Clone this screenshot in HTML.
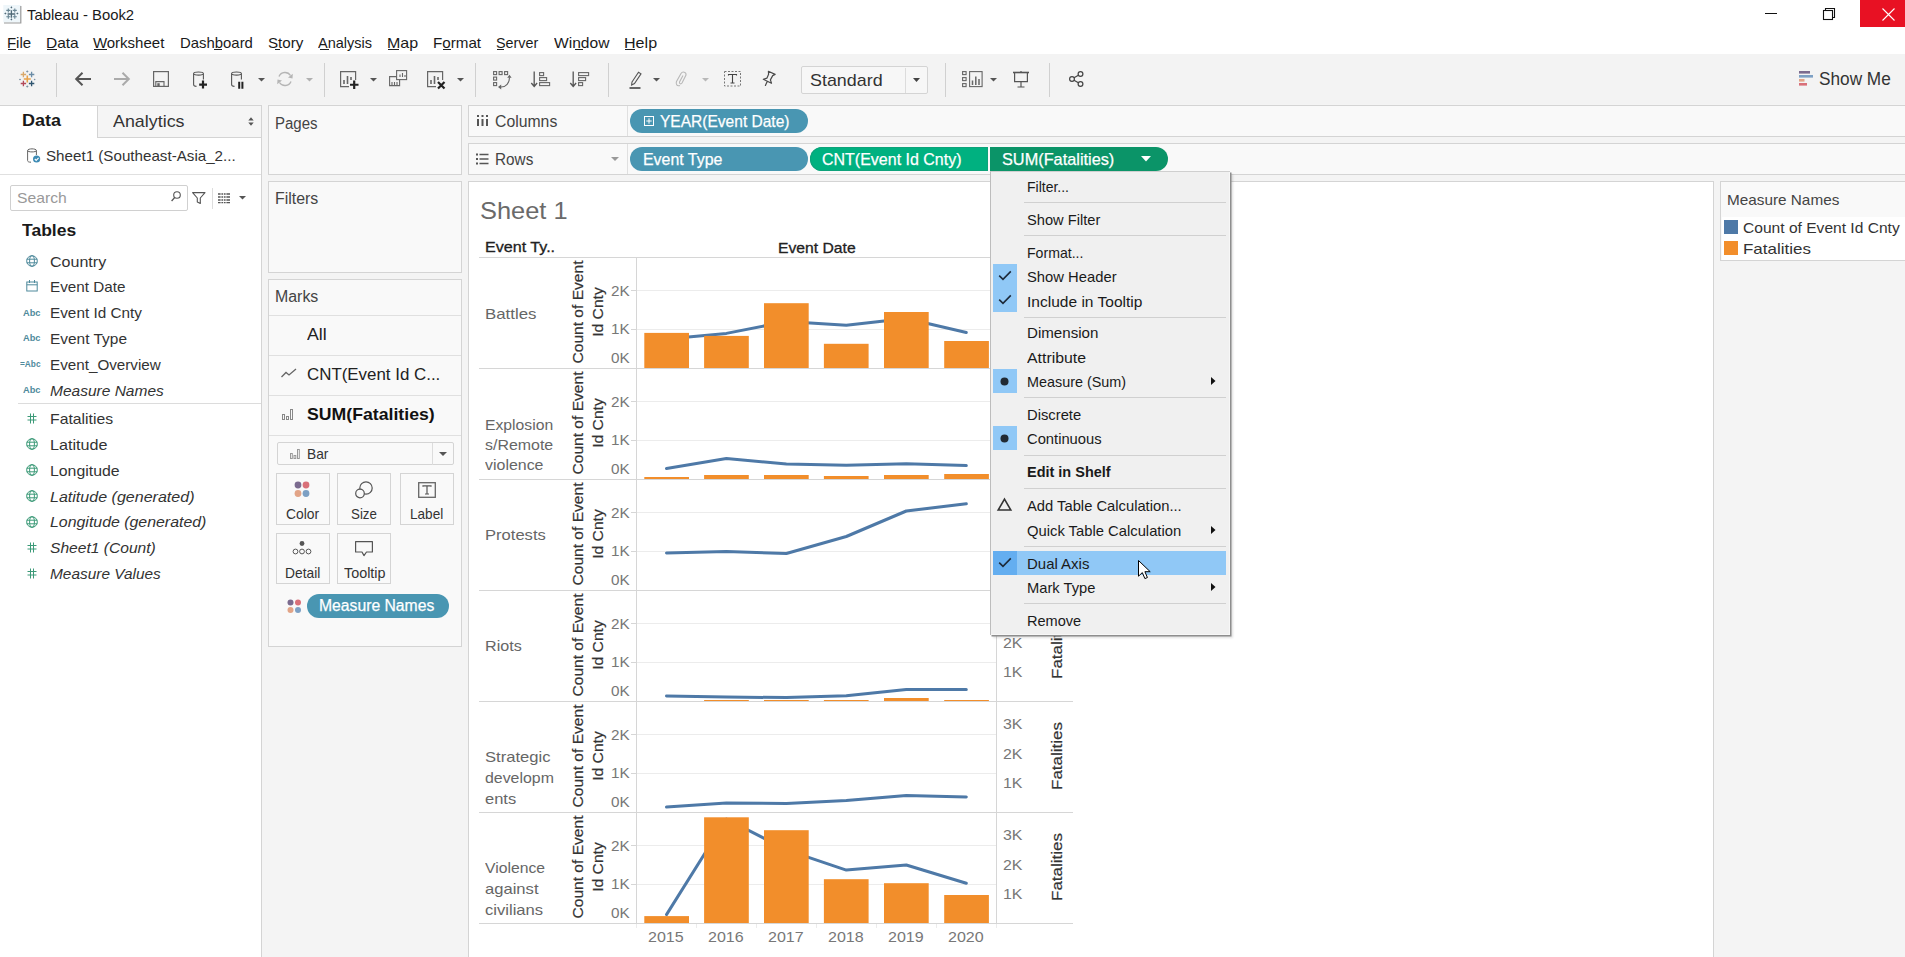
<!DOCTYPE html>
<html><head><meta charset="utf-8"><title>Tableau - Book2</title>
<style>
html,body{margin:0;padding:0;}
body{width:1905px;height:957px;overflow:hidden;position:relative;background:#f4f4f4;font-family:'Liberation Sans', sans-serif;}
.t{position:absolute;white-space:nowrap;transform-origin:0 0;}
svg{overflow:visible}
</style></head><body>
<div style="position:absolute;left:0px;top:0px;width:1905px;height:54px;background:#fff"></div><svg style="position:absolute;left:3px;top:5px;" width="19" height="19" viewBox="0 0 19 19"><rect x="0.3" y="0" width="17.5" height="17.5" fill="#eef6fa"/><path d="M17.8 1V18H1" fill="none" stroke="#9a9a9a" stroke-width="1.2"/><g stroke="#506a78" stroke-width="1.3"><path d="M8.4 5.2v7.6M4.6 9h7.6"/></g><g stroke="#6a8694" stroke-width="1.1"><path d="M5.3 3.4v4M3.3 5.4h4M11.8 3.4v4M9.8 5.4h4M5.3 9.8v4M3.3 11.8h4M11.8 9.8v4M9.8 11.8h4"/></g><g fill="#506a78"><path d="M8.4 1.2L9.4 2.4L8.4 3.6L7.4 2.4Z M8.4 13.2L9.4 14.4L8.4 15.6L7.4 14.4Z M1.2 8.4L2.4 7.4L3.6 8.4L2.4 9.4Z M13.2 8.4L14.4 7.4L15.6 8.4L14.4 9.4Z"/></g></svg><div id="t1" class="t" style="left:26.90px;top:7.00px;font-size:15px;line-height:15px;color:#1a1a1a;transform:scaleX(0.9880);">Tableau - Book2</div><div style="position:absolute;left:1765px;top:13px;width:12px;height:1px;background:#111"></div><svg style="position:absolute;left:1822px;top:7px;" width="14" height="14" viewBox="0 0 14 14"><rect x="1.5" y="3.5" width="9" height="9" fill="none" stroke="#111" stroke-width="1.1"/><path d="M3.5 3.5V1.5h9v9h-2" fill="none" stroke="#111" stroke-width="1.1"/></svg><div style="position:absolute;left:1860px;top:0px;width:45px;height:27px;background:#e81123"></div><svg style="position:absolute;left:1882px;top:8px;" width="13" height="13" viewBox="0 0 13 13"><path d="M0.5 0.5L12.5 12.5M12.5 0.5L0.5 12.5" stroke="#fff" stroke-width="1.1"/></svg><div id="t2" class="t" style="left:6.90px;top:34.60px;font-size:15px;line-height:15px;color:#1a1a1a;">File</div><div id="t3" class="t" style="left:46.20px;top:34.60px;font-size:15px;line-height:15px;color:#1a1a1a;transform:scaleX(1.0320);">Data</div><div id="t4" class="t" style="left:92.90px;top:34.60px;font-size:15px;line-height:15px;color:#1a1a1a;">Worksheet</div><div id="t5" class="t" style="left:179.50px;top:34.60px;font-size:15px;line-height:15px;color:#1a1a1a;transform:scaleX(0.9933);">Dashboard</div><div id="t6" class="t" style="left:267.90px;top:34.60px;font-size:15px;line-height:15px;color:#1a1a1a;transform:scaleX(1.0110);">Story</div><div id="t7" class="t" style="left:318.40px;top:34.60px;font-size:15px;line-height:15px;color:#1a1a1a;transform:scaleX(0.9667);">Analysis</div><div id="t8" class="t" style="left:386.90px;top:34.60px;font-size:15px;line-height:15px;color:#1a1a1a;transform:scaleX(1.0690);">Map</div><div id="t9" class="t" style="left:433.30px;top:34.60px;font-size:15px;line-height:15px;color:#1a1a1a;transform:scaleX(1.0123);">Format</div><div id="t10" class="t" style="left:495.90px;top:34.60px;font-size:15px;line-height:15px;color:#1a1a1a;transform:scaleX(0.9573);">Server</div><div id="t11" class="t" style="left:553.70px;top:34.60px;font-size:15px;line-height:15px;color:#1a1a1a;transform:scaleX(1.0382);">Window</div><div id="t12" class="t" style="left:624.20px;top:34.60px;font-size:15px;line-height:15px;color:#1a1a1a;transform:scaleX(1.0726);">Help</div><div style="position:absolute;left:8px;top:49px;width:8px;height:1px;background:#222"></div><div style="position:absolute;left:47px;top:49px;width:10px;height:1px;background:#222"></div><div style="position:absolute;left:94px;top:49px;width:13px;height:1px;background:#222"></div><div style="position:absolute;left:214px;top:49px;width:8px;height:1px;background:#222"></div><div style="position:absolute;left:275px;top:49px;width:5px;height:1px;background:#222"></div><div style="position:absolute;left:319.5px;top:49px;width:9px;height:1px;background:#222"></div><div style="position:absolute;left:388px;top:49px;width:11px;height:1px;background:#222"></div><div style="position:absolute;left:443px;top:49px;width:8px;height:1px;background:#222"></div><div style="position:absolute;left:497px;top:49px;width:7px;height:1px;background:#222"></div><div style="position:absolute;left:575px;top:49px;width:8px;height:1px;background:#222"></div><div style="position:absolute;left:625.3px;top:49px;width:10px;height:1px;background:#222"></div><div style="position:absolute;left:0px;top:54px;width:1905px;height:50px;background:#f3f3f3"></div><div style="position:absolute;left:56px;top:63px;width:1px;height:34px;background:#d0d0d0"></div><div style="position:absolute;left:324px;top:63px;width:1px;height:34px;background:#d0d0d0"></div><div style="position:absolute;left:475px;top:63px;width:1px;height:34px;background:#d0d0d0"></div><div style="position:absolute;left:608px;top:63px;width:1px;height:34px;background:#d0d0d0"></div><div style="position:absolute;left:945px;top:63px;width:1px;height:34px;background:#d0d0d0"></div><div style="position:absolute;left:1049px;top:63px;width:1px;height:34px;background:#d0d0d0"></div><svg style="position:absolute;left:20px;top:69.5px;" width="15" height="18" viewBox="0 0 15 18"><g stroke-width="1.6"><path d="M7.3 5.5v7M3.8 9h7" stroke="#e8a24a"/><path d="M3.4 1.8v5.4M0.7 4.5h5.4" stroke="#d9a86a" stroke-width="1.3"/><path d="M11.6 1.8v5.4M8.9 4.5h5.4" stroke="#6a8ca6" stroke-width="1.3"/><path d="M3.4 10.8v5.4M0.7 13.5h5.4" stroke="#b34a5a" stroke-width="1.3"/><path d="M11.6 10.8v5.4M8.9 13.5h5.4" stroke="#2f5570" stroke-width="1.3"/><path d="M7.3 0.5v2M6.3 1.5h2M7.3 15.5v2M6.3 16.5h2M0 8.8v1.4M-0.7 9.5h1.4M14.6 8.8v1.4M13.9 9.5h1.4" stroke="#7f93a3" stroke-width="1"/></g></svg><svg style="position:absolute;left:75px;top:72px;" width="17" height="14" viewBox="0 0 17 14"><path d="M1 7H16M7.5 0.8L1.2 7L7.5 13.2" fill="none" stroke="#555" stroke-width="2"/></svg><svg style="position:absolute;left:114px;top:72px;" width="17" height="14" viewBox="0 0 17 14"><path d="M0 7H15M8.5 0.8L14.8 7L8.5 13.2" fill="none" stroke="#aaa" stroke-width="2"/></svg><svg style="position:absolute;left:153px;top:71px;" width="16" height="16" viewBox="0 0 16 16"><rect x="0.6" y="0.6" width="14.8" height="14.8" fill="none" stroke="#666" stroke-width="1.2"/><path d="M2.8 15.4V10.6h8.2v4.8" fill="none" stroke="#666" stroke-width="1.1"/><rect x="4.3" y="12.2" width="2.4" height="3" fill="#666"/></svg><svg style="position:absolute;left:193px;top:71px;" width="16" height="18" viewBox="0 0 16 18"><path d="M0.6 2.6C0.6 0.4 10.4 0.4 10.4 2.6V8.5M0.6 2.6C0.6 4.6 10.4 4.6 10.4 2.6M0.6 2.6V13.6C0.6 15 2.5 15.4 3.5 15.4" fill="none" stroke="#555" stroke-width="1.1"/><path d="M10 9.6v8M6.2 13.6h7.8" stroke="#222" stroke-width="2.2"/></svg><svg style="position:absolute;left:231px;top:71px;" width="16" height="18" viewBox="0 0 16 18"><path d="M0.6 2.6C0.6 0.4 10.4 0.4 10.4 2.6V8.5M0.6 2.6C0.6 4.6 10.4 4.6 10.4 2.6M0.6 2.6V13.6C0.6 15 2.5 15.4 3.5 15.4" fill="none" stroke="#555" stroke-width="1.1"/><path d="M8.2 10.8v7M11.4 10.8v7" stroke="#222" stroke-width="2"/></svg><svg style="position:absolute;left:258.0px;top:77.7px;" width="7" height="3.6" viewBox="0 0 7 3.6"><path d="M0 0H7L3.5 3.6Z" fill="#555"/></svg><svg style="position:absolute;left:276px;top:71px;" width="18" height="16" viewBox="0 0 18 16"><path d="M3 5.5A6.5 6.5 0 0 1 14.5 4.5M15 10.5A6.5 6.5 0 0 1 3.5 11.5" fill="none" stroke="#b5b5b5" stroke-width="1.4"/><path d="M16.8 2.8L16.5 7.5L12 6.5Z M1.2 13.2L1.5 8.5L6 9.5Z" fill="#b5b5b5"/></svg><svg style="position:absolute;left:306.2px;top:77.7px;" width="7" height="3.6" viewBox="0 0 7 3.6"><path d="M0 0H7L3.5 3.6Z" fill="#b0b0b0"/></svg><svg style="position:absolute;left:340px;top:71px;" width="20" height="19" viewBox="0 0 20 19"><path d="M15.6 9V0.6H0.6V15.6H9" fill="none" stroke="#666" stroke-width="1.2"/><path d="M4 13V9M7.5 13V5M11 9V6" stroke="#666" stroke-width="1.6"/><path d="M14.2 9.5v8.5M10 13.75h8.5" stroke="#222" stroke-width="2.2"/></svg><svg style="position:absolute;left:370.0px;top:77.7px;" width="7" height="3.6" viewBox="0 0 7 3.6"><path d="M0 0H7L3.5 3.6Z" fill="#555"/></svg><svg style="position:absolute;left:389px;top:70px;" width="19" height="17" viewBox="0 0 19 17"><rect x="7.6" y="0.6" width="10" height="9" fill="#f3f3f3" stroke="#666" stroke-width="1.1"/><path d="M11 7V4.5M13.5 7V3M16 7V5" stroke="#666" stroke-width="1.1"/><path d="M7.6 6.6H0.6V15.6H10.6V9.6" fill="none" stroke="#666" stroke-width="1.1"/><path d="M3 15v-3M5.5 15v-3M8 15v-3" stroke="#666" stroke-width="1.1"/></svg><svg style="position:absolute;left:427px;top:71px;" width="20" height="19" viewBox="0 0 20 19"><path d="M15.6 9V0.6H0.6V15.6H9" fill="none" stroke="#666" stroke-width="1.2"/><path d="M4 13V9M7.5 13V5M11 9V6" stroke="#666" stroke-width="1.6"/><path d="M11 11L17.5 17.5M17.5 11L11 17.5" stroke="#222" stroke-width="2.2"/></svg><svg style="position:absolute;left:456.5px;top:77.7px;" width="7" height="3.6" viewBox="0 0 7 3.6"><path d="M0 0H7L3.5 3.6Z" fill="#555"/></svg><svg style="position:absolute;left:493px;top:71px;" width="18" height="18" viewBox="0 0 18 18"><g fill="none" stroke="#666" stroke-width="1.1"><rect x="0.6" y="0.6" width="3" height="3"/><rect x="6.1" y="0.6" width="3" height="3"/><rect x="11.6" y="0.6" width="3" height="3"/><rect x="0.6" y="6.1" width="3" height="3"/><rect x="0.6" y="11.6" width="3" height="3"/><path d="M16.5 6.5C16.5 12 13 16 8 16"/></g><path d="M14.2 6.8L16.5 3.8L18.6 6.8Z M8.2 13.6L5 16L8.2 18.4Z" fill="#666"/></svg><svg style="position:absolute;left:531px;top:71px;" width="20" height="17" viewBox="0 0 20 17"><path d="M3.2 0.5V15M0.3 12L3.2 15.5L6.1 12" fill="none" stroke="#555" stroke-width="1.3"/><g fill="none" stroke="#666" stroke-width="1.1"><rect x="8.6" y="1.6" width="4" height="3"/><rect x="8.6" y="6.6" width="7" height="3"/><rect x="8.6" y="11.6" width="10" height="3"/></g></svg><svg style="position:absolute;left:570px;top:71px;" width="20" height="17" viewBox="0 0 20 17"><path d="M3.2 0.5V15M0.3 12L3.2 15.5L6.1 12" fill="none" stroke="#555" stroke-width="1.3"/><g fill="none" stroke="#666" stroke-width="1.1"><rect x="8.6" y="1.6" width="10" height="3"/><rect x="8.6" y="6.6" width="7" height="3"/><rect x="8.6" y="11.6" width="4" height="3"/></g></svg><svg style="position:absolute;left:629px;top:71px;" width="14" height="18" viewBox="0 0 14 18"><path d="M3 11L9.5 1.2L12 2.8L5.5 12.6L2.6 14Z" fill="none" stroke="#555" stroke-width="1.1"/><path d="M0.5 17h11" stroke="#444" stroke-width="1.6"/></svg><svg style="position:absolute;left:652.5px;top:77.7px;" width="7" height="3.6" viewBox="0 0 7 3.6"><path d="M0 0H7L3.5 3.6Z" fill="#555"/></svg><svg style="position:absolute;left:675px;top:71px;" width="13" height="16" viewBox="0 0 13 16"><path d="M5 14.5C2 15.5 0.5 13 1.5 10.5L6 2.5C7.5 0 11.5 1 11 4L7 12C6 13.5 4 13 4.5 11L8 4.5" fill="none" stroke="#b8b8b8" stroke-width="1.1"/></svg><svg style="position:absolute;left:701.5px;top:77.7px;" width="7" height="3.6" viewBox="0 0 7 3.6"><path d="M0 0H7L3.5 3.6Z" fill="#b8b8b8"/></svg><svg style="position:absolute;left:724px;top:71px;" width="18" height="16" viewBox="0 0 18 16"><rect x="0.5" y="0.5" width="16" height="14.5" fill="none" stroke="#777" stroke-width="1" stroke-dasharray="2 1.5"/><path d="M4.5 4.5V3.5H12.5V4.5M8.5 3.5V12M6.5 12h4" fill="none" stroke="#444" stroke-width="1.1"/></svg><svg style="position:absolute;left:755px;top:66px;" width="30" height="26" viewBox="0 0 30 26"><path d="M13.4 5.3L20.1 8.4L17.7 9.6L15.4 13.9L16.5 17.3L12.3 15.2L8.3 13.3L12 12.1L13.6 8.3Z M12.3 15.3L10.4 19.4" fill="none" stroke="#4a4a4a" stroke-width="1.2" stroke-linejoin="round" stroke-linecap="round"/></svg><div style="position:absolute;left:800.8px;top:66px;width:127px;height:27.5px;background:#f7f7f7;border:1px solid #d4d4d4;border-radius:2px;box-sizing:border-box"></div><div style="position:absolute;left:905px;top:67.5px;width:1px;height:25px;background:#dcdcdc"></div><div id="t13" class="t" style="left:809.70px;top:71.61px;font-size:17px;line-height:17px;color:#333;transform:scaleX(1.0522);">Standard</div><svg style="position:absolute;left:912.5px;top:78.0px;" width="7" height="4" viewBox="0 0 7 4"><path d="M0 0H7L3.5 4Z" fill="#444"/></svg><svg style="position:absolute;left:962px;top:71px;" width="21" height="17" viewBox="0 0 21 17"><g fill="none" stroke="#666" stroke-width="1.1"><rect x="0.6" y="0.6" width="3.5" height="3"/><rect x="0.6" y="6.6" width="3.5" height="3"/><rect x="0.6" y="12.6" width="3.5" height="3"/><rect x="7.6" y="0.6" width="12.5" height="15"/></g><path d="M10.5 14V9.5M13.8 14V5.5M17 14V8" stroke="#666" stroke-width="1.5"/></svg><svg style="position:absolute;left:989.5px;top:77.7px;" width="7" height="3.6" viewBox="0 0 7 3.6"><path d="M0 0H7L3.5 3.6Z" fill="#555"/></svg><svg style="position:absolute;left:1012px;top:71px;" width="18" height="17" viewBox="0 0 18 17"><path d="M1 1.5H17" stroke="#555" stroke-width="1.6"/><path d="M2.6 2V10.6H15.4V2" fill="none" stroke="#555" stroke-width="1.2"/><path d="M9 0V1M9 10.6V16M5.5 16h7" stroke="#555" stroke-width="1.2"/></svg><svg style="position:absolute;left:1069px;top:71px;" width="15" height="16" viewBox="0 0 15 16"><g fill="none" stroke="#444" stroke-width="1.2"><circle cx="3" cy="8" r="2.4"/><circle cx="11.5" cy="3" r="2.4"/><circle cx="11.5" cy="13" r="2.4"/><path d="M5 6.8L9.4 4.2M5 9.2L9.4 11.8"/></g></svg><svg style="position:absolute;left:1799px;top:71px;" width="15" height="15" viewBox="0 0 15 15"><rect x="0" y="0" width="11" height="2.6" fill="#7b6b8f"/><rect x="0" y="4" width="14" height="2.6" fill="#7da0c4"/><rect x="0" y="8" width="5.5" height="2.6" fill="#e2a487"/><rect x="0" y="12" width="8" height="2.6" fill="#d97079"/></svg><div id="t14" class="t" style="left:1818.60px;top:69.56px;font-size:18px;line-height:18px;color:#333;transform:scaleX(0.9567);">Show Me</div><div style="position:absolute;left:0px;top:105px;width:262px;height:852px;background:#fff;border-top:1px solid #d4d4d4;border-right:1px solid #d4d4d4;box-sizing:border-box"></div><div style="position:absolute;left:97px;top:106px;width:164px;height:32px;background:#f5f5f5;border-left:1px solid #d4d4d4;border-bottom:1px solid #d4d4d4;box-sizing:border-box"></div><div id="t15" class="t" style="left:21.60px;top:112.21px;font-size:17px;line-height:17px;color:#1a1a1a;font-weight:bold;transform:scaleX(1.0581);">Data</div><div id="t16" class="t" style="left:112.90px;top:113.21px;font-size:17px;line-height:17px;color:#333;transform:scaleX(1.0510);">Analytics</div><svg style="position:absolute;left:247.5px;top:116.5px;" width="6" height="9" viewBox="0 0 6 9"><path d="M0.3 3.4L3 0.3L5.7 3.4Z M0.3 5.6L3 8.7L5.7 5.6Z" fill="#555"/></svg><svg style="position:absolute;left:27px;top:148px;" width="14" height="15" viewBox="0 0 14 15"><path d="M0.6 2.5C0.6 0.3 9.4 0.3 9.4 2.5V7M0.6 2.5C0.6 4.4 9.4 4.4 9.4 2.5M0.6 2.5V12.5C0.6 13.8 2 14.2 4 14.2" fill="none" stroke="#666" stroke-width="1"/><circle cx="9.6" cy="11" r="3.6" fill="#3d8bb4"/><path d="M7.8 11L9.2 12.4L11.6 9.8" fill="none" stroke="#fff" stroke-width="1.1"/></svg><div id="t17" class="t" style="left:45.70px;top:148.30px;font-size:15px;line-height:15px;color:#333;transform:scaleX(1.0111);">Sheet1 (Southeast-Asia_2...</div><div style="position:absolute;left:0px;top:174px;width:261px;height:1px;background:#e0e0e0"></div><div style="position:absolute;left:10.3px;top:184.6px;width:177.5px;height:26.7px;background:#fff;border:1px solid #d0d0d0;border-radius:2px;box-sizing:border-box"></div><div id="t18" class="t" style="left:17.30px;top:189.60px;font-size:15px;line-height:15px;color:#999;transform:scaleX(1.0456);">Search</div><svg style="position:absolute;left:171px;top:191px;" width="10" height="11" viewBox="0 0 10 11"><circle cx="6" cy="4" r="3.3" fill="none" stroke="#555" stroke-width="1.1"/><path d="M3.7 6.5L0.6 10" stroke="#555" stroke-width="1.2"/></svg><svg style="position:absolute;left:192px;top:192px;" width="14" height="12" viewBox="0 0 14 12"><path d="M0.6 0.6H13L8.3 6V11.5L5.3 10V6Z" fill="none" stroke="#555" stroke-width="1.1" stroke-linejoin="round"/></svg><div style="position:absolute;left:211.5px;top:188px;width:1px;height:21px;background:#ddd"></div><svg style="position:absolute;left:218px;top:193px;" width="12" height="10" viewBox="0 0 12 10"><g stroke="#555" stroke-width="1.3"><path d="M0 1H12M0 4H12M0 7H12M0 9.6H12"/></g><g stroke="#fff" stroke-width="0.8"><path d="M3 0V11M5.5 0V11M8 0V11"/></g></svg><svg style="position:absolute;left:238.8px;top:196.2px;" width="7" height="3.6" viewBox="0 0 7 3.6"><path d="M0 0H7L3.5 3.6Z" fill="#555"/></svg><div id="t19" class="t" style="left:21.70px;top:222.11px;font-size:17px;line-height:17px;color:#1a1a1a;font-weight:bold;transform:scaleX(1.0305);">Tables</div><svg style="position:absolute;left:25.8px;top:254.7px;" width="12" height="12" viewBox="0 0 12 12"><g fill="none" stroke="#4f8a9c" stroke-width="1"><circle cx="6" cy="6" r="5.3"/><ellipse cx="6" cy="6" rx="2.4" ry="5.3"/><path d="M0.7 4.2H11.3M0.7 7.8H11.3"/></g></svg><div id="t20" class="t" style="left:49.50px;top:253.50px;font-size:15px;line-height:15px;color:#333;transform:scaleX(1.0698);">Country</div><svg style="position:absolute;left:26px;top:280.0px;" width="12" height="12" viewBox="0 0 12 12"><g fill="none" stroke="#4f8a9c" stroke-width="1"><rect x="0.8" y="2" width="10.4" height="9"/><path d="M0.8 4.8H11.2M3.5 0V3M8.5 0V3"/></g></svg><div id="t21" class="t" style="left:49.50px;top:278.80px;font-size:15px;line-height:15px;color:#333;transform:scaleX(1.0159);">Event Date</div><div id="t22" class="t" style="left:22.90px;top:308.58px;font-size:9px;line-height:9px;color:#4f8a9c;font-weight:bold;transform:scaleX(1.0285);">Abc</div><div id="t23" class="t" style="left:49.50px;top:305.20px;font-size:15px;line-height:15px;color:#333;transform:scaleX(1.0206);">Event Id Cnty</div><div id="t24" class="t" style="left:22.90px;top:334.38px;font-size:9px;line-height:9px;color:#4f8a9c;font-weight:bold;transform:scaleX(1.0285);">Abc</div><div id="t25" class="t" style="left:49.50px;top:331.00px;font-size:15px;line-height:15px;color:#333;transform:scaleX(1.0297);">Event Type</div><div id="t26" class="t" style="left:19.90px;top:360.18px;font-size:9px;line-height:9px;color:#4f8a9c;font-weight:bold;transform:scaleX(0.9207);">=Abc</div><div id="t27" class="t" style="left:49.50px;top:356.80px;font-size:15px;line-height:15px;color:#333;transform:scaleX(1.0145);">Event_Overview</div><div id="t28" class="t" style="left:22.90px;top:385.98px;font-size:9px;line-height:9px;color:#4f8a9c;font-weight:bold;transform:scaleX(1.0285);">Abc</div><div id="t29" class="t" style="left:49.50px;top:382.60px;font-size:15px;line-height:15px;color:#333;font-style:italic;transform:scaleX(1.0341);">Measure Names</div><svg style="position:absolute;left:26.8px;top:412.8px;" width="10" height="11" viewBox="0 0 10 11"><g stroke="#3c9a78" stroke-width="1"><path d="M3.5 0.5V10.5M6.5 0.5V10.5M0.5 3.5H9.5M0.5 7H9.5"/></g></svg><div id="t30" class="t" style="left:49.50px;top:411.10px;font-size:15px;line-height:15px;color:#333;transform:scaleX(1.0511);">Fatalities</div><svg style="position:absolute;left:25.8px;top:438.1px;" width="12" height="12" viewBox="0 0 12 12"><g fill="none" stroke="#3c9a78" stroke-width="1"><circle cx="6" cy="6" r="5.3"/><ellipse cx="6" cy="6" rx="2.4" ry="5.3"/><path d="M0.7 4.2H11.3M0.7 7.8H11.3"/></g></svg><div id="t31" class="t" style="left:49.50px;top:436.90px;font-size:15px;line-height:15px;color:#333;transform:scaleX(1.0770);">Latitude</div><svg style="position:absolute;left:25.8px;top:464.0px;" width="12" height="12" viewBox="0 0 12 12"><g fill="none" stroke="#3c9a78" stroke-width="1"><circle cx="6" cy="6" r="5.3"/><ellipse cx="6" cy="6" rx="2.4" ry="5.3"/><path d="M0.7 4.2H11.3M0.7 7.8H11.3"/></g></svg><div id="t32" class="t" style="left:49.50px;top:462.80px;font-size:15px;line-height:15px;color:#333;transform:scaleX(1.0560);">Longitude</div><svg style="position:absolute;left:25.8px;top:489.8px;" width="12" height="12" viewBox="0 0 12 12"><g fill="none" stroke="#3c9a78" stroke-width="1"><circle cx="6" cy="6" r="5.3"/><ellipse cx="6" cy="6" rx="2.4" ry="5.3"/><path d="M0.7 4.2H11.3M0.7 7.8H11.3"/></g></svg><div id="t33" class="t" style="left:49.50px;top:488.60px;font-size:15px;line-height:15px;color:#333;font-style:italic;transform:scaleX(1.0695);">Latitude (generated)</div><svg style="position:absolute;left:25.8px;top:515.6px;" width="12" height="12" viewBox="0 0 12 12"><g fill="none" stroke="#3c9a78" stroke-width="1"><circle cx="6" cy="6" r="5.3"/><ellipse cx="6" cy="6" rx="2.4" ry="5.3"/><path d="M0.7 4.2H11.3M0.7 7.8H11.3"/></g></svg><div id="t34" class="t" style="left:49.50px;top:514.40px;font-size:15px;line-height:15px;color:#333;font-style:italic;transform:scaleX(1.0594);">Longitude (generated)</div><svg style="position:absolute;left:26.8px;top:541.9px;" width="10" height="11" viewBox="0 0 10 11"><g stroke="#3c9a78" stroke-width="1"><path d="M3.5 0.5V10.5M6.5 0.5V10.5M0.5 3.5H9.5M0.5 7H9.5"/></g></svg><div id="t35" class="t" style="left:49.50px;top:540.20px;font-size:15px;line-height:15px;color:#333;font-style:italic;transform:scaleX(1.0400);">Sheet1 (Count)</div><svg style="position:absolute;left:26.8px;top:567.7px;" width="10" height="11" viewBox="0 0 10 11"><g stroke="#3c9a78" stroke-width="1"><path d="M3.5 0.5V10.5M6.5 0.5V10.5M0.5 3.5H9.5M0.5 7H9.5"/></g></svg><div id="t36" class="t" style="left:49.50px;top:566.00px;font-size:15px;line-height:15px;color:#333;font-style:italic;transform:scaleX(1.0274);">Measure Values</div><div style="position:absolute;left:18px;top:403px;width:243px;height:1px;background:#dcdcdc"></div><div style="position:absolute;left:268px;top:105px;width:194px;height:70px;background:#f9f9f9;border:1px solid #d4d4d4;box-sizing:border-box"></div><div id="t37" class="t" style="left:275.30px;top:115.66px;font-size:16px;line-height:16px;color:#444;transform:scaleX(0.9388);">Pages</div><div style="position:absolute;left:268px;top:181px;width:194px;height:92px;background:#f9f9f9;border:1px solid #d4d4d4;box-sizing:border-box"></div><div id="t38" class="t" style="left:275.30px;top:191.46px;font-size:16px;line-height:16px;color:#444;transform:scaleX(0.9940);">Filters</div><div style="position:absolute;left:268px;top:279px;width:194px;height:368px;background:#f9f9f9;border:1px solid #d4d4d4;box-sizing:border-box"></div><div id="t39" class="t" style="left:275.30px;top:289.46px;font-size:16px;line-height:16px;color:#444;transform:scaleX(0.9940);">Marks</div><div style="position:absolute;left:269px;top:315px;width:192px;height:1px;background:#e0e0e0"></div><div style="position:absolute;left:269px;top:355px;width:192px;height:1px;background:#e0e0e0"></div><div style="position:absolute;left:269px;top:395px;width:192px;height:1px;background:#e0e0e0"></div><div style="position:absolute;left:269px;top:435px;width:192px;height:1px;background:#e0e0e0"></div><div id="t40" class="t" style="left:306.70px;top:326.11px;font-size:17px;line-height:17px;color:#222;transform:scaleX(1.0420);">All</div><svg style="position:absolute;left:281px;top:368px;" width="16" height="10" viewBox="0 0 16 10"><path d="M0.5 9L5 4.5L8 7L15 1" fill="none" stroke="#666" stroke-width="1.3"/></svg><div id="t41" class="t" style="left:306.70px;top:366.31px;font-size:17px;line-height:17px;color:#222;transform:scaleX(0.9937);">CNT(Event Id C...</div><svg style="position:absolute;left:282px;top:409px;" width="12" height="11" viewBox="0 0 12 11"><g fill="none" stroke="#888" stroke-width="1"><rect x="0.5" y="5.5" width="2" height="5"/><rect x="4.5" y="7.5" width="2" height="3"/><rect x="8.5" y="0.5" width="2" height="10"/></g></svg><div id="t42" class="t" style="left:306.70px;top:405.61px;font-size:17px;line-height:17px;color:#111;font-weight:bold;transform:scaleX(1.0399);">SUM(Fatalities)</div><div style="position:absolute;left:276.6px;top:442.3px;width:177px;height:23.2px;background:#f9f9f9;border:1px solid #d4d4d4;border-radius:2px;box-sizing:border-box"></div><div style="position:absolute;left:431.6px;top:443px;width:1px;height:22px;background:#dcdcdc"></div><svg style="position:absolute;left:290px;top:449px;" width="10" height="10" viewBox="0 0 10 10"><g fill="none" stroke="#999" stroke-width="1"><rect x="0.5" y="4.5" width="1.8" height="5"/><rect x="4" y="6.5" width="1.8" height="3"/><rect x="7.5" y="0.5" width="1.8" height="9"/></g></svg><div id="t43" class="t" style="left:306.70px;top:446.10px;font-size:15px;line-height:15px;color:#333;transform:scaleX(0.9167);">Bar</div><svg style="position:absolute;left:438.5px;top:452.0px;" width="8" height="4" viewBox="0 0 8 4"><path d="M0 0H8L4.0 4Z" fill="#555"/></svg><div style="position:absolute;left:276.3px;top:473.3px;width:53.5px;height:51.5px;background:#f9f9f9;border:1px solid #d4d4d4;box-sizing:border-box"></div><div style="position:absolute;left:337.4px;top:473.3px;width:53.5px;height:51.5px;background:#f9f9f9;border:1px solid #d4d4d4;box-sizing:border-box"></div><div style="position:absolute;left:400.3px;top:473.3px;width:53.5px;height:51.5px;background:#f9f9f9;border:1px solid #d4d4d4;box-sizing:border-box"></div><div style="position:absolute;left:276.3px;top:532.5px;width:53.5px;height:51.5px;background:#f9f9f9;border:1px solid #d4d4d4;box-sizing:border-box"></div><div style="position:absolute;left:337.4px;top:532.5px;width:53.5px;height:51.5px;background:#f9f9f9;border:1px solid #d4d4d4;box-sizing:border-box"></div><svg style="position:absolute;left:294px;top:481px;" width="16" height="17" viewBox="0 0 16 17"><circle cx="4" cy="4" r="3.4" fill="#7b6b8f"/><circle cx="12" cy="4" r="3.4" fill="#d97079"/><circle cx="4" cy="12.5" r="3.4" fill="#e2a487"/><circle cx="12" cy="12.5" r="3.4" fill="#7da0c4"/></svg><div id="t44" class="t" style="left:286.30px;top:505.90px;font-size:15px;line-height:15px;color:#333;transform:scaleX(0.9231);">Color</div><svg style="position:absolute;left:355px;top:481px;" width="19" height="18" viewBox="0 0 19 18"><g fill="none" stroke="#555" stroke-width="1.2"><circle cx="11" cy="7" r="6.2"/><circle cx="5" cy="12.5" r="4.3" fill="#f9f9f9"/></g></svg><div id="t45" class="t" style="left:351.20px;top:505.90px;font-size:15px;line-height:15px;color:#333;transform:scaleX(0.8874);">Size</div><svg style="position:absolute;left:418px;top:482px;" width="18" height="16" viewBox="0 0 18 16"><rect x="0.7" y="0.7" width="16.6" height="14.6" fill="none" stroke="#666" stroke-width="1.3"/><path d="M5 4.8V3.8H13V4.8M9 3.8V12M7 12h4" fill="none" stroke="#555" stroke-width="1.2"/></svg><div id="t46" class="t" style="left:410.20px;top:505.90px;font-size:15px;line-height:15px;color:#333;transform:scaleX(0.9046);">Label</div><svg style="position:absolute;left:292px;top:541px;" width="20" height="14" viewBox="0 0 20 14"><circle cx="10" cy="2.5" r="2.4" fill="#555"/><g fill="none" stroke="#555" stroke-width="1"><circle cx="3.5" cy="10.5" r="2.4"/><circle cx="10" cy="10.5" r="2.4"/><circle cx="16.5" cy="10.5" r="2.4"/></g></svg><div id="t47" class="t" style="left:285.10px;top:564.80px;font-size:15px;line-height:15px;color:#333;transform:scaleX(0.9202);">Detail</div><svg style="position:absolute;left:355px;top:541px;" width="19" height="16" viewBox="0 0 19 16"><path d="M0.6 0.6H17.4V11H11.5L9 14.6L7 11H0.6Z" fill="none" stroke="#555" stroke-width="1.2" stroke-linejoin="round"/></svg><div id="t48" class="t" style="left:343.90px;top:564.80px;font-size:15px;line-height:15px;color:#333;transform:scaleX(0.9571);">Tooltip</div><svg style="position:absolute;left:286.8px;top:599px;" width="15" height="15" viewBox="0 0 15 15"><circle cx="3.5" cy="3.5" r="3" fill="#7b6b8f"/><circle cx="11" cy="3.5" r="3" fill="#d97079"/><circle cx="3.5" cy="11" r="3" fill="#e2a487"/><circle cx="11" cy="11" r="3" fill="#7da0c4"/></svg><div style="position:absolute;left:307.3px;top:594px;width:141.3px;height:23.8px;background:#4996b2;border-radius:12px"></div><div id="t49" class="t" style="left:319.40px;top:597.96px;font-size:16px;line-height:16px;color:#fff;transform:scaleX(0.9823);-webkit-text-stroke:0.25px #fff;">Measure Names</div><div style="position:absolute;left:468px;top:105px;width:1450px;height:32px;background:#f9f9f9;border:1px solid #d4d4d4;box-sizing:border-box"></div><div style="position:absolute;left:627px;top:106px;width:1px;height:30px;background:#e0e0e0"></div><svg style="position:absolute;left:477px;top:115px;" width="11" height="11" viewBox="0 0 11 11"><g stroke="#555" stroke-width="2"><path d="M1 4V11M5.5 4V11M10 4V11"/></g><g fill="#555"><rect x="0" y="0" width="2" height="2"/><rect x="4.5" y="0" width="2" height="2"/><rect x="9" y="0" width="2" height="2"/></g></svg><div id="t50" class="t" style="left:495.10px;top:112.61px;font-size:17px;line-height:17px;color:#444;transform:scaleX(0.9286);">Columns</div><div style="position:absolute;left:629.8px;top:109px;width:178.2px;height:23.5px;background:#4996b2;border-radius:12px"></div><svg style="position:absolute;left:643.6px;top:116px;" width="10" height="10" viewBox="0 0 10 10"><rect x="0.5" y="0.5" width="9" height="9" fill="none" stroke="#fff" stroke-width="1"/><path d="M5 2.3V7.7M2.3 5H7.7" stroke="#fff" stroke-width="1"/></svg><div id="t51" class="t" style="left:659.50px;top:112.61px;font-size:17px;line-height:17px;color:#fff;transform:scaleX(0.9137);-webkit-text-stroke:0.25px #fff;">YEAR(Event Date)</div><div style="position:absolute;left:468px;top:143px;width:1450px;height:32px;background:#f9f9f9;border:1px solid #d4d4d4;box-sizing:border-box"></div><div style="position:absolute;left:627px;top:144px;width:1px;height:30px;background:#e0e0e0"></div><svg style="position:absolute;left:476px;top:153px;" width="13" height="12" viewBox="0 0 13 12"><g fill="#555"><rect x="0" y="0.5" width="2" height="2"/><rect x="0" y="5" width="2" height="2"/><rect x="0" y="9.5" width="2" height="2"/></g><g stroke="#555" stroke-width="1.5"><path d="M3.5 1.5H12.5M3.5 6H12.5M3.5 10.5H12.5"/></g></svg><div id="t52" class="t" style="left:495.10px;top:151.11px;font-size:17px;line-height:17px;color:#444;transform:scaleX(0.9008);">Rows</div><svg style="position:absolute;left:611.3px;top:156.5px;" width="8" height="4" viewBox="0 0 8 4"><path d="M0 0H8L4.0 4Z" fill="#999"/></svg><div style="position:absolute;left:629.8px;top:147.3px;width:178.2px;height:23.7px;background:#4996b2;border-radius:12px"></div><div id="t53" class="t" style="left:642.50px;top:151.11px;font-size:17px;line-height:17px;color:#fff;transform:scaleX(0.9369);-webkit-text-stroke:0.25px #fff;">Event Type</div><div style="position:absolute;left:810.4px;top:147.2px;width:177.6px;height:23.6px;background:#00b180;border-radius:12px 0 0 12px;box-shadow:inset 0 0 0 1px #0ea27a"></div><div id="t54" class="t" style="left:821.90px;top:151.11px;font-size:17px;line-height:17px;color:#fff;transform:scaleX(0.9406);-webkit-text-stroke:0.25px #fff;">CNT(Event Id Cnty)</div><div style="position:absolute;left:989.8px;top:147.2px;width:177.9px;height:23.6px;background:#0b9468;border-radius:0 12px 12px 0"></div><div id="t55" class="t" style="left:1002.10px;top:151.11px;font-size:17px;line-height:17px;color:#fff;transform:scaleX(0.9588);-webkit-text-stroke:0.25px #fff;">SUM(Fatalities)</div><svg style="position:absolute;left:1141.4px;top:155.75px;" width="10" height="5.5" viewBox="0 0 10 5.5"><path d="M0 0H10L5.0 5.5Z" fill="#fff"/></svg><div style="position:absolute;left:468px;top:181px;width:1246px;height:776px;background:#fff;border:1px solid #d4d4d4;border-bottom:none;box-sizing:border-box"></div><div style="position:absolute;left:1719.5px;top:181px;width:186px;height:79.5px;background:#f9f9f9;border:1px solid #d4d4d4;border-right:none;box-sizing:border-box"></div><div style="position:absolute;left:1721.5px;top:216.6px;width:184px;height:43.2px;background:#fff"></div><div id="t56" class="t" style="left:1727.40px;top:191.80px;font-size:15px;line-height:15px;color:#444;transform:scaleX(1.0205);">Measure Names</div><div style="position:absolute;left:1724.1px;top:220.2px;width:13.8px;height:13.4px;background:#4e79a7"></div><div id="t57" class="t" style="left:1742.60px;top:220.30px;font-size:15px;line-height:15px;color:#333;transform:scaleX(1.0383);">Count of Event Id Cnty</div><div style="position:absolute;left:1724.1px;top:241px;width:13.8px;height:13.8px;background:#f28e2b"></div><div id="t58" class="t" style="left:1742.60px;top:241.20px;font-size:15px;line-height:15px;color:#333;transform:scaleX(1.1311);">Fatalities</div><div id="t59" class="t" style="left:480.20px;top:199.18px;font-size:24px;line-height:24px;color:#6a6a6a;transform:scaleX(1.0588);">Sheet 1</div><div id="t60" class="t" style="left:484.80px;top:239.30px;font-size:15px;line-height:15px;color:#222;transform:scaleX(1.0733);-webkit-text-stroke:0.3px #222;">Event Ty..</div><div id="t61" class="t" style="left:777.70px;top:240.00px;font-size:15px;line-height:15px;color:#222;transform:scaleX(1.0469);-webkit-text-stroke:0.3px #222;">Event Date</div><div style="position:absolute;left:479px;top:257px;width:594px;height:1px;background:#d6d6d6"></div><div style="position:absolute;left:479px;top:368px;width:594px;height:1px;background:#d6d6d6"></div><div style="position:absolute;left:479px;top:479px;width:594px;height:1px;background:#d6d6d6"></div><div style="position:absolute;left:479px;top:590px;width:594px;height:1px;background:#d6d6d6"></div><div style="position:absolute;left:479px;top:701px;width:594px;height:1px;background:#d6d6d6"></div><div style="position:absolute;left:479px;top:812px;width:594px;height:1px;background:#d6d6d6"></div><div style="position:absolute;left:479px;top:923px;width:594px;height:1px;background:#d6d6d6"></div><div style="position:absolute;left:636px;top:258px;width:1px;height:666px;background:#d6d6d6"></div><div style="position:absolute;left:996px;top:258px;width:1px;height:666px;background:#d6d6d6"></div><div style="position:absolute;left:637px;top:290px;width:359px;height:1px;background:#ececec"></div><div style="position:absolute;left:631px;top:290px;width:5px;height:1px;background:#d6d6d6"></div><div style="position:absolute;left:637px;top:329px;width:359px;height:1px;background:#ececec"></div><div style="position:absolute;left:631px;top:329px;width:5px;height:1px;background:#d6d6d6"></div><div style="position:absolute;left:637px;top:401px;width:359px;height:1px;background:#ececec"></div><div style="position:absolute;left:631px;top:401px;width:5px;height:1px;background:#d6d6d6"></div><div style="position:absolute;left:637px;top:440px;width:359px;height:1px;background:#ececec"></div><div style="position:absolute;left:631px;top:440px;width:5px;height:1px;background:#d6d6d6"></div><div style="position:absolute;left:637px;top:512px;width:359px;height:1px;background:#ececec"></div><div style="position:absolute;left:631px;top:512px;width:5px;height:1px;background:#d6d6d6"></div><div style="position:absolute;left:637px;top:551px;width:359px;height:1px;background:#ececec"></div><div style="position:absolute;left:631px;top:551px;width:5px;height:1px;background:#d6d6d6"></div><div style="position:absolute;left:637px;top:623px;width:359px;height:1px;background:#ececec"></div><div style="position:absolute;left:631px;top:623px;width:5px;height:1px;background:#d6d6d6"></div><div style="position:absolute;left:637px;top:662px;width:359px;height:1px;background:#ececec"></div><div style="position:absolute;left:631px;top:662px;width:5px;height:1px;background:#d6d6d6"></div><div style="position:absolute;left:637px;top:734px;width:359px;height:1px;background:#ececec"></div><div style="position:absolute;left:631px;top:734px;width:5px;height:1px;background:#d6d6d6"></div><div style="position:absolute;left:637px;top:773px;width:359px;height:1px;background:#ececec"></div><div style="position:absolute;left:631px;top:773px;width:5px;height:1px;background:#d6d6d6"></div><div style="position:absolute;left:637px;top:845px;width:359px;height:1px;background:#ececec"></div><div style="position:absolute;left:631px;top:845px;width:5px;height:1px;background:#d6d6d6"></div><div style="position:absolute;left:637px;top:884px;width:359px;height:1px;background:#ececec"></div><div style="position:absolute;left:631px;top:884px;width:5px;height:1px;background:#d6d6d6"></div><svg style="position:absolute;left:636px;top:257px;" width="360" height="667" viewBox="0 0 360 667"><polyline points="30.5,81.9 90.4,76.4 150.4,64.6 210.3,68.3 270.3,61.5 330.3,75.5" fill="none" stroke="#4e79a7" stroke-width="3" stroke-linejoin="round" stroke-linecap="round"/><polyline points="30.5,211.4 90.4,201.6 150.4,206.9 210.3,208.2 270.3,206.7 330.3,208.6" fill="none" stroke="#4e79a7" stroke-width="3" stroke-linejoin="round" stroke-linecap="round"/><polyline points="30.5,296.0 90.4,294.6 150.4,296.5 210.3,279.5 270.3,254.0 330.3,246.8" fill="none" stroke="#4e79a7" stroke-width="3" stroke-linejoin="round" stroke-linecap="round"/><polyline points="30.5,439.1 90.4,440.0 150.4,440.6 210.3,438.7 270.3,432.5 330.3,432.5" fill="none" stroke="#4e79a7" stroke-width="3" stroke-linejoin="round" stroke-linecap="round"/><polyline points="30.5,550.1 90.4,546.0 150.4,546.5 210.3,543.5 270.3,538.4 330.3,539.9" fill="none" stroke="#4e79a7" stroke-width="3" stroke-linejoin="round" stroke-linecap="round"/><polyline points="30.5,657.6 90.4,562.0 150.4,592.8 210.3,613.1 270.3,608.0 330.3,626.2" fill="none" stroke="#4e79a7" stroke-width="3" stroke-linejoin="round" stroke-linecap="round"/><rect x="8.3" y="75.9" width="44.7" height="35.4" fill="#f28e2b"/><rect x="68.1" y="78.9" width="44.7" height="32.4" fill="#f28e2b"/><rect x="128.0" y="46.2" width="44.7" height="65.1" fill="#f28e2b"/><rect x="187.9" y="86.8" width="44.7" height="24.5" fill="#f28e2b"/><rect x="248.0" y="55.0" width="44.7" height="56.3" fill="#f28e2b"/><rect x="308.2" y="84.0" width="44.7" height="27.3" fill="#f28e2b"/><rect x="8.3" y="220.0" width="44.7" height="2.3" fill="#f28e2b"/><rect x="68.1" y="218.0" width="44.7" height="4.3" fill="#f28e2b"/><rect x="128.0" y="218.0" width="44.7" height="4.3" fill="#f28e2b"/><rect x="187.9" y="219.0" width="44.7" height="3.3" fill="#f28e2b"/><rect x="248.0" y="218.0" width="44.7" height="4.3" fill="#f28e2b"/><rect x="308.2" y="217.0" width="44.7" height="5.3" fill="#f28e2b"/><rect x="68.1" y="443.0" width="44.7" height="1.3" fill="#f28e2b"/><rect x="128.0" y="443.0" width="44.7" height="1.3" fill="#f28e2b"/><rect x="187.9" y="443.0" width="44.7" height="1.3" fill="#f28e2b"/><rect x="248.0" y="441.0" width="44.7" height="3.3" fill="#f28e2b"/><rect x="308.2" y="443.0" width="44.7" height="1.3" fill="#f28e2b"/><rect x="8.3" y="659.1" width="44.7" height="7.2" fill="#f28e2b"/><rect x="68.1" y="560.3" width="44.7" height="106.0" fill="#f28e2b"/><rect x="128.0" y="573.2" width="44.7" height="93.1" fill="#f28e2b"/><rect x="187.9" y="622.2" width="44.7" height="44.1" fill="#f28e2b"/><rect x="248.0" y="626.2" width="44.7" height="40.1" fill="#f28e2b"/><rect x="308.2" y="638.0" width="44.7" height="28.3" fill="#f28e2b"/></svg><div style="position:absolute;left:637px;top:368px;width:359px;height:1px;background:#d6d6d6"></div><div style="position:absolute;left:637px;top:479px;width:359px;height:1px;background:#d6d6d6"></div><div style="position:absolute;left:637px;top:590px;width:359px;height:1px;background:#d6d6d6"></div><div style="position:absolute;left:637px;top:701px;width:359px;height:1px;background:#d6d6d6"></div><div style="position:absolute;left:637px;top:812px;width:359px;height:1px;background:#d6d6d6"></div><div style="position:absolute;left:637px;top:923px;width:359px;height:1px;background:#d6d6d6"></div><div id="t62" class="t" style="left:485.00px;top:305.50px;font-size:15px;line-height:15px;color:#666;transform:scaleX(1.1230);">Battles</div><div id="t63" class="t" style="left:577.50px;top:311.80px;font-size:15px;line-height:15px;color:#333;transform:rotate(-90deg) scaleX(1.0379) translate(-50%,-7.54px);transform-origin:0 0;-webkit-text-stroke:0.2px #333;">Count of Event</div><div id="t64" class="t" style="left:597.50px;top:311.80px;font-size:15px;line-height:15px;color:#333;transform:rotate(-90deg) scaleX(1.0414) translate(-50%,-7.54px);transform-origin:0 0;-webkit-text-stroke:0.2px #333;">Id Cnty</div><div id="t65" class="t" style="left:610.70px;top:283.53px;font-size:14.5px;line-height:14.5px;color:#777;transform:scaleX(1.0535);">2K</div><div id="t66" class="t" style="left:610.70px;top:322.33px;font-size:14.5px;line-height:14.5px;color:#777;transform:scaleX(1.0535);">1K</div><div id="t67" class="t" style="left:610.70px;top:350.53px;font-size:14.5px;line-height:14.5px;color:#777;transform:scaleX(1.0535);">0K</div><div id="t68" class="t" style="left:1003.10px;top:273.33px;font-size:14.5px;line-height:14.5px;color:#777;transform:scaleX(1.0986);">3K</div><div id="t69" class="t" style="left:1003.10px;top:302.93px;font-size:14.5px;line-height:14.5px;color:#777;transform:scaleX(1.0986);">2K</div><div id="t70" class="t" style="left:1003.10px;top:332.23px;font-size:14.5px;line-height:14.5px;color:#777;transform:scaleX(1.0986);">1K</div><div id="t71" class="t" style="left:1056.50px;top:311.60px;font-size:15px;line-height:15px;color:#333;transform:rotate(-90deg) scaleX(1.1327) translate(-50%,-7.54px);transform-origin:0 0;-webkit-text-stroke:0.2px #333;">Fatalities</div><div id="t72" class="t" style="left:485.00px;top:416.70px;font-size:15px;line-height:15px;color:#666;transform:scaleX(1.0485);">Explosion</div><div id="t73" class="t" style="left:485.00px;top:436.90px;font-size:15px;line-height:15px;color:#666;transform:scaleX(1.0623);">s/Remote</div><div id="t74" class="t" style="left:485.00px;top:457.30px;font-size:15px;line-height:15px;color:#666;transform:scaleX(1.0627);">violence</div><div id="t75" class="t" style="left:577.50px;top:422.80px;font-size:15px;line-height:15px;color:#333;transform:rotate(-90deg) scaleX(1.0379) translate(-50%,-7.54px);transform-origin:0 0;-webkit-text-stroke:0.2px #333;">Count of Event</div><div id="t76" class="t" style="left:597.50px;top:422.80px;font-size:15px;line-height:15px;color:#333;transform:rotate(-90deg) scaleX(1.0414) translate(-50%,-7.54px);transform-origin:0 0;-webkit-text-stroke:0.2px #333;">Id Cnty</div><div id="t77" class="t" style="left:610.70px;top:394.53px;font-size:14.5px;line-height:14.5px;color:#777;transform:scaleX(1.0535);">2K</div><div id="t78" class="t" style="left:610.70px;top:433.33px;font-size:14.5px;line-height:14.5px;color:#777;transform:scaleX(1.0535);">1K</div><div id="t79" class="t" style="left:610.70px;top:461.53px;font-size:14.5px;line-height:14.5px;color:#777;transform:scaleX(1.0535);">0K</div><div id="t80" class="t" style="left:1003.10px;top:384.33px;font-size:14.5px;line-height:14.5px;color:#777;transform:scaleX(1.0986);">3K</div><div id="t81" class="t" style="left:1003.10px;top:413.93px;font-size:14.5px;line-height:14.5px;color:#777;transform:scaleX(1.0986);">2K</div><div id="t82" class="t" style="left:1003.10px;top:443.23px;font-size:14.5px;line-height:14.5px;color:#777;transform:scaleX(1.0986);">1K</div><div id="t83" class="t" style="left:1056.50px;top:422.60px;font-size:15px;line-height:15px;color:#333;transform:rotate(-90deg) scaleX(1.1327) translate(-50%,-7.54px);transform-origin:0 0;-webkit-text-stroke:0.2px #333;">Fatalities</div><div id="t84" class="t" style="left:485.00px;top:526.60px;font-size:15px;line-height:15px;color:#666;transform:scaleX(1.1048);">Protests</div><div id="t85" class="t" style="left:577.50px;top:533.80px;font-size:15px;line-height:15px;color:#333;transform:rotate(-90deg) scaleX(1.0379) translate(-50%,-7.54px);transform-origin:0 0;-webkit-text-stroke:0.2px #333;">Count of Event</div><div id="t86" class="t" style="left:597.50px;top:533.80px;font-size:15px;line-height:15px;color:#333;transform:rotate(-90deg) scaleX(1.0414) translate(-50%,-7.54px);transform-origin:0 0;-webkit-text-stroke:0.2px #333;">Id Cnty</div><div id="t87" class="t" style="left:610.70px;top:505.53px;font-size:14.5px;line-height:14.5px;color:#777;transform:scaleX(1.0535);">2K</div><div id="t88" class="t" style="left:610.70px;top:544.33px;font-size:14.5px;line-height:14.5px;color:#777;transform:scaleX(1.0535);">1K</div><div id="t89" class="t" style="left:610.70px;top:572.53px;font-size:14.5px;line-height:14.5px;color:#777;transform:scaleX(1.0535);">0K</div><div id="t90" class="t" style="left:1003.10px;top:495.33px;font-size:14.5px;line-height:14.5px;color:#777;transform:scaleX(1.0986);">3K</div><div id="t91" class="t" style="left:1003.10px;top:524.93px;font-size:14.5px;line-height:14.5px;color:#777;transform:scaleX(1.0986);">2K</div><div id="t92" class="t" style="left:1003.10px;top:554.23px;font-size:14.5px;line-height:14.5px;color:#777;transform:scaleX(1.0986);">1K</div><div id="t93" class="t" style="left:1056.50px;top:533.60px;font-size:15px;line-height:15px;color:#333;transform:rotate(-90deg) scaleX(1.1327) translate(-50%,-7.54px);transform-origin:0 0;-webkit-text-stroke:0.2px #333;">Fatalities</div><div id="t94" class="t" style="left:485.00px;top:638.00px;font-size:15px;line-height:15px;color:#666;transform:scaleX(1.0735);">Riots</div><div id="t95" class="t" style="left:577.50px;top:644.80px;font-size:15px;line-height:15px;color:#333;transform:rotate(-90deg) scaleX(1.0379) translate(-50%,-7.54px);transform-origin:0 0;-webkit-text-stroke:0.2px #333;">Count of Event</div><div id="t96" class="t" style="left:597.50px;top:644.80px;font-size:15px;line-height:15px;color:#333;transform:rotate(-90deg) scaleX(1.0414) translate(-50%,-7.54px);transform-origin:0 0;-webkit-text-stroke:0.2px #333;">Id Cnty</div><div id="t97" class="t" style="left:610.70px;top:616.53px;font-size:14.5px;line-height:14.5px;color:#777;transform:scaleX(1.0535);">2K</div><div id="t98" class="t" style="left:610.70px;top:655.33px;font-size:14.5px;line-height:14.5px;color:#777;transform:scaleX(1.0535);">1K</div><div id="t99" class="t" style="left:610.70px;top:683.53px;font-size:14.5px;line-height:14.5px;color:#777;transform:scaleX(1.0535);">0K</div><div id="t100" class="t" style="left:1003.10px;top:606.33px;font-size:14.5px;line-height:14.5px;color:#777;transform:scaleX(1.0986);">3K</div><div id="t101" class="t" style="left:1003.10px;top:635.93px;font-size:14.5px;line-height:14.5px;color:#777;transform:scaleX(1.0986);">2K</div><div id="t102" class="t" style="left:1003.10px;top:665.23px;font-size:14.5px;line-height:14.5px;color:#777;transform:scaleX(1.0986);">1K</div><div id="t103" class="t" style="left:1056.50px;top:644.60px;font-size:15px;line-height:15px;color:#333;transform:rotate(-90deg) scaleX(1.1327) translate(-50%,-7.54px);transform-origin:0 0;-webkit-text-stroke:0.2px #333;">Fatalities</div><div id="t104" class="t" style="left:485.00px;top:749.10px;font-size:15px;line-height:15px;color:#666;transform:scaleX(1.1064);">Strategic</div><div id="t105" class="t" style="left:485.00px;top:770.10px;font-size:15px;line-height:15px;color:#666;transform:scaleX(1.0592);">developm</div><div id="t106" class="t" style="left:485.00px;top:790.50px;font-size:15px;line-height:15px;color:#666;transform:scaleX(1.1002);">ents</div><div id="t107" class="t" style="left:577.50px;top:755.80px;font-size:15px;line-height:15px;color:#333;transform:rotate(-90deg) scaleX(1.0379) translate(-50%,-7.54px);transform-origin:0 0;-webkit-text-stroke:0.2px #333;">Count of Event</div><div id="t108" class="t" style="left:597.50px;top:755.80px;font-size:15px;line-height:15px;color:#333;transform:rotate(-90deg) scaleX(1.0414) translate(-50%,-7.54px);transform-origin:0 0;-webkit-text-stroke:0.2px #333;">Id Cnty</div><div id="t109" class="t" style="left:610.70px;top:727.53px;font-size:14.5px;line-height:14.5px;color:#777;transform:scaleX(1.0535);">2K</div><div id="t110" class="t" style="left:610.70px;top:766.33px;font-size:14.5px;line-height:14.5px;color:#777;transform:scaleX(1.0535);">1K</div><div id="t111" class="t" style="left:610.70px;top:794.53px;font-size:14.5px;line-height:14.5px;color:#777;transform:scaleX(1.0535);">0K</div><div id="t112" class="t" style="left:1003.10px;top:717.33px;font-size:14.5px;line-height:14.5px;color:#777;transform:scaleX(1.0986);">3K</div><div id="t113" class="t" style="left:1003.10px;top:746.93px;font-size:14.5px;line-height:14.5px;color:#777;transform:scaleX(1.0986);">2K</div><div id="t114" class="t" style="left:1003.10px;top:776.23px;font-size:14.5px;line-height:14.5px;color:#777;transform:scaleX(1.0986);">1K</div><div id="t115" class="t" style="left:1056.50px;top:755.60px;font-size:15px;line-height:15px;color:#333;transform:rotate(-90deg) scaleX(1.1327) translate(-50%,-7.54px);transform-origin:0 0;-webkit-text-stroke:0.2px #333;">Fatalities</div><div id="t116" class="t" style="left:485.00px;top:859.70px;font-size:15px;line-height:15px;color:#666;transform:scaleX(1.0475);">Violence</div><div id="t117" class="t" style="left:485.00px;top:880.70px;font-size:15px;line-height:15px;color:#666;transform:scaleX(1.1059);">against</div><div id="t118" class="t" style="left:485.00px;top:901.60px;font-size:15px;line-height:15px;color:#666;transform:scaleX(1.1063);">civilians</div><div id="t119" class="t" style="left:577.50px;top:866.80px;font-size:15px;line-height:15px;color:#333;transform:rotate(-90deg) scaleX(1.0379) translate(-50%,-7.54px);transform-origin:0 0;-webkit-text-stroke:0.2px #333;">Count of Event</div><div id="t120" class="t" style="left:597.50px;top:866.80px;font-size:15px;line-height:15px;color:#333;transform:rotate(-90deg) scaleX(1.0414) translate(-50%,-7.54px);transform-origin:0 0;-webkit-text-stroke:0.2px #333;">Id Cnty</div><div id="t121" class="t" style="left:610.70px;top:838.53px;font-size:14.5px;line-height:14.5px;color:#777;transform:scaleX(1.0535);">2K</div><div id="t122" class="t" style="left:610.70px;top:877.33px;font-size:14.5px;line-height:14.5px;color:#777;transform:scaleX(1.0535);">1K</div><div id="t123" class="t" style="left:610.70px;top:905.53px;font-size:14.5px;line-height:14.5px;color:#777;transform:scaleX(1.0535);">0K</div><div id="t124" class="t" style="left:1003.10px;top:828.33px;font-size:14.5px;line-height:14.5px;color:#777;transform:scaleX(1.0986);">3K</div><div id="t125" class="t" style="left:1003.10px;top:857.93px;font-size:14.5px;line-height:14.5px;color:#777;transform:scaleX(1.0986);">2K</div><div id="t126" class="t" style="left:1003.10px;top:887.23px;font-size:14.5px;line-height:14.5px;color:#777;transform:scaleX(1.0986);">1K</div><div id="t127" class="t" style="left:1056.50px;top:866.60px;font-size:15px;line-height:15px;color:#333;transform:rotate(-90deg) scaleX(1.1327) translate(-50%,-7.54px);transform-origin:0 0;-webkit-text-stroke:0.2px #333;">Fatalities</div><div style="position:absolute;left:636px;top:924px;width:1px;height:4px;background:#ececec"></div><div style="position:absolute;left:696px;top:924px;width:1px;height:4px;background:#ececec"></div><div style="position:absolute;left:756px;top:924px;width:1px;height:4px;background:#ececec"></div><div style="position:absolute;left:816px;top:924px;width:1px;height:4px;background:#ececec"></div><div style="position:absolute;left:876px;top:924px;width:1px;height:4px;background:#ececec"></div><div style="position:absolute;left:936px;top:924px;width:1px;height:4px;background:#ececec"></div><div style="position:absolute;left:996px;top:924px;width:1px;height:4px;background:#ececec"></div><div id="t128" class="t" style="left:648.30px;top:930.43px;font-size:14.5px;line-height:14.5px;color:#777;transform:scaleX(1.1064);">2015</div><div id="t129" class="t" style="left:708.20px;top:930.43px;font-size:14.5px;line-height:14.5px;color:#777;transform:scaleX(1.1064);">2016</div><div id="t130" class="t" style="left:768.20px;top:930.43px;font-size:14.5px;line-height:14.5px;color:#777;transform:scaleX(1.1064);">2017</div><div id="t131" class="t" style="left:828.10px;top:930.43px;font-size:14.5px;line-height:14.5px;color:#777;transform:scaleX(1.1064);">2018</div><div id="t132" class="t" style="left:888.10px;top:930.43px;font-size:14.5px;line-height:14.5px;color:#777;transform:scaleX(1.1064);">2019</div><div id="t133" class="t" style="left:948.10px;top:930.43px;font-size:14.5px;line-height:14.5px;color:#777;transform:scaleX(1.1064);">2020</div><div style="position:absolute;left:990px;top:171px;width:240px;height:464px;background:#f0f0f0;border-left:1px solid #bdbdbd;border-top:1px solid #cfcfcf;box-sizing:border-box;box-shadow:inset -1px -1px 0 #f7f7f7, 1.5px 1.5px 0 #8e8e8e, 2.5px 2.5px 2px rgba(0,0,0,0.12)"></div><div style="position:absolute;left:993.2px;top:264px;width:23.8px;height:48px;background:#90c8f6"></div><div style="position:absolute;left:993.2px;top:369.2px;width:23.8px;height:23.8px;background:#90c8f6"></div><div style="position:absolute;left:993.2px;top:426px;width:23.8px;height:24px;background:#90c8f6"></div><div style="position:absolute;left:1017px;top:551.2px;width:209px;height:23.4px;background:#90c8f6"></div><div style="position:absolute;left:993.2px;top:551.2px;width:23.8px;height:23.4px;background:#64aef0"></div><div style="position:absolute;left:1023.7px;top:202px;width:202.5px;height:1px;background:#d0d0d0"></div><div style="position:absolute;left:1023.7px;top:235px;width:202.5px;height:1px;background:#d0d0d0"></div><div style="position:absolute;left:1023.7px;top:317px;width:202.5px;height:1px;background:#d0d0d0"></div><div style="position:absolute;left:1023.7px;top:397px;width:202.5px;height:1px;background:#d0d0d0"></div><div style="position:absolute;left:1023.7px;top:455px;width:202.5px;height:1px;background:#d0d0d0"></div><div style="position:absolute;left:1023.7px;top:488px;width:202.5px;height:1px;background:#d0d0d0"></div><div style="position:absolute;left:1023.7px;top:546px;width:202.5px;height:1px;background:#d0d0d0"></div><div style="position:absolute;left:1023.7px;top:603px;width:202.5px;height:1px;background:#d0d0d0"></div><div id="t134" class="t" style="left:1026.70px;top:179.20px;font-size:15px;line-height:15px;color:#1a1a1a;transform:scaleX(0.9330);">Filter...</div><div id="t135" class="t" style="left:1026.70px;top:212.10px;font-size:15px;line-height:15px;color:#1a1a1a;transform:scaleX(0.9769);">Show Filter</div><div id="t136" class="t" style="left:1026.70px;top:245.10px;font-size:15px;line-height:15px;color:#1a1a1a;transform:scaleX(0.9398);">Format...</div><div id="t137" class="t" style="left:1026.70px;top:269.00px;font-size:15px;line-height:15px;color:#1a1a1a;transform:scaleX(0.9858);">Show Header</div><div id="t138" class="t" style="left:1026.70px;top:294.00px;font-size:15px;line-height:15px;color:#1a1a1a;transform:scaleX(1.0353);">Include in Tooltip</div><div id="t139" class="t" style="left:1026.70px;top:325.30px;font-size:15px;line-height:15px;color:#1a1a1a;transform:scaleX(1.0074);">Dimension</div><div id="t140" class="t" style="left:1026.70px;top:349.70px;font-size:15px;line-height:15px;color:#1a1a1a;transform:scaleX(1.0577);">Attribute</div><div id="t141" class="t" style="left:1026.70px;top:374.20px;font-size:15px;line-height:15px;color:#1a1a1a;transform:scaleX(0.9588);">Measure (Sum)</div><div id="t142" class="t" style="left:1026.70px;top:407.10px;font-size:15px;line-height:15px;color:#1a1a1a;transform:scaleX(0.9852);">Discrete</div><div id="t143" class="t" style="left:1026.70px;top:430.90px;font-size:15px;line-height:15px;color:#1a1a1a;transform:scaleX(0.9830);">Continuous</div><div id="t144" class="t" style="left:1026.70px;top:463.80px;font-size:15px;line-height:15px;color:#1a1a1a;font-weight:bold;transform:scaleX(0.9646);">Edit in Shelf</div><div id="t145" class="t" style="left:1026.70px;top:498.00px;font-size:15px;line-height:15px;color:#1a1a1a;transform:scaleX(0.9833);">Add Table Calculation...</div><div id="t146" class="t" style="left:1026.70px;top:522.60px;font-size:15px;line-height:15px;color:#1a1a1a;transform:scaleX(0.9854);">Quick Table Calculation</div><div id="t147" class="t" style="left:1026.70px;top:556.00px;font-size:15px;line-height:15px;color:#1a1a1a;transform:scaleX(0.9979);">Dual Axis</div><div id="t148" class="t" style="left:1026.70px;top:579.80px;font-size:15px;line-height:15px;color:#1a1a1a;transform:scaleX(0.9806);">Mark Type</div><div id="t149" class="t" style="left:1026.70px;top:613.00px;font-size:15px;line-height:15px;color:#1a1a1a;transform:scaleX(0.9703);">Remove</div><svg style="position:absolute;left:998px;top:270px;" width="14" height="11" viewBox="0 0 14 11"><path d="M1.2 5.6L5 9.4L12.8 1.4" fill="none" stroke="#1d2a3a" stroke-width="1.6"/></svg><svg style="position:absolute;left:998px;top:294px;" width="14" height="11" viewBox="0 0 14 11"><path d="M1.2 5.6L5 9.4L12.8 1.4" fill="none" stroke="#1d2a3a" stroke-width="1.6"/></svg><svg style="position:absolute;left:998px;top:557px;" width="14" height="11" viewBox="0 0 14 11"><path d="M1.2 5.6L5 9.4L12.8 1.4" fill="none" stroke="#1d2a3a" stroke-width="1.6"/></svg><svg style="position:absolute;left:1000px;top:376.5px;" width="9" height="9" viewBox="0 0 9 9"><circle cx="4.5" cy="4.5" r="4" fill="#222a33"/></svg><svg style="position:absolute;left:1000px;top:433.5px;" width="9" height="9" viewBox="0 0 9 9"><circle cx="4.5" cy="4.5" r="4" fill="#222a33"/></svg><svg style="position:absolute;left:1211px;top:377px;" width="5" height="8" viewBox="0 0 5 8"><path d="M0 0L4.5 4L0 8Z" fill="#111"/></svg><svg style="position:absolute;left:1211px;top:526px;" width="5" height="8" viewBox="0 0 5 8"><path d="M0 0L4.5 4L0 8Z" fill="#111"/></svg><svg style="position:absolute;left:1211px;top:583px;" width="5" height="8" viewBox="0 0 5 8"><path d="M0 0L4.5 4L0 8Z" fill="#111"/></svg><svg style="position:absolute;left:997px;top:498px;" width="15" height="13" viewBox="0 0 15 13"><path d="M7.5 1.2L13.8 12H1.2Z" fill="none" stroke="#333" stroke-width="1.6" stroke-linejoin="miter"/></svg><svg style="position:absolute;left:1138px;top:560px;" width="13" height="20" viewBox="0 0 13 20"><path d="M0.5 0.5V16.2L4.3 12.6L6.9 18.6L9.4 17.5L6.9 11.7H12.2Z" fill="#fff" stroke="#000" stroke-width="1" stroke-linejoin="round"/></svg>
</body></html>
